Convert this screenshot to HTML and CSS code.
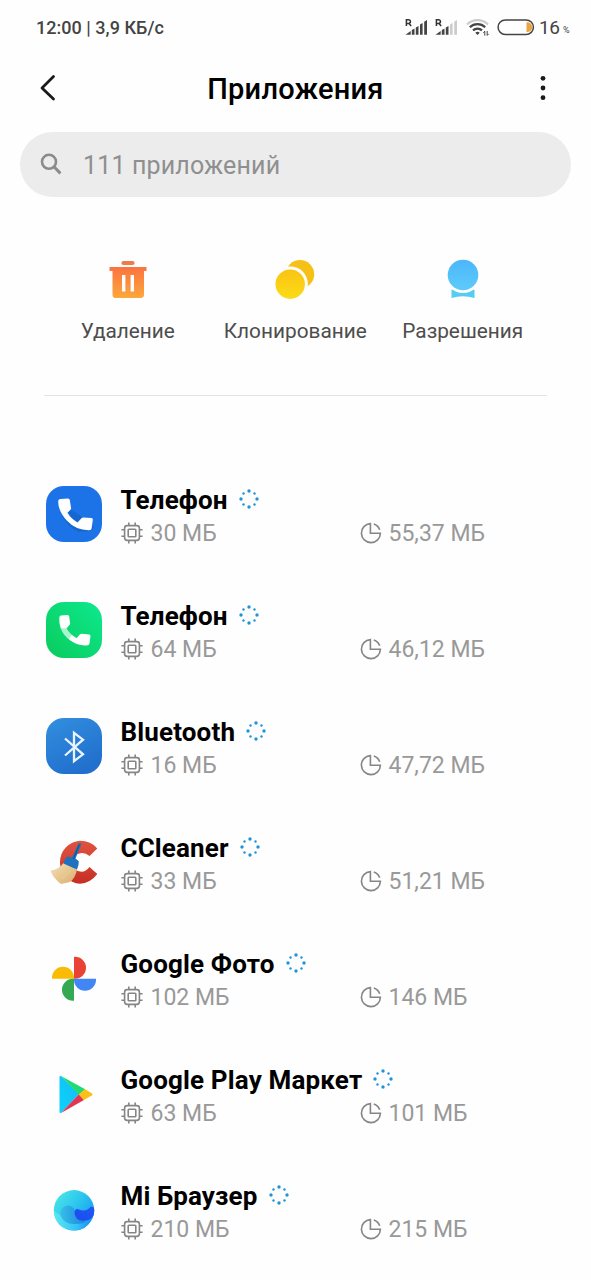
FILE: index.html
```html
<!DOCTYPE html>
<html lang="ru">
<head>
<meta charset="utf-8">
<title>Приложения</title>
<link rel="stylesheet" href="styles.css">
</head>
<body>
<svg class="defs" width="0" height="0" aria-hidden="true">
  <symbol id="spin" viewBox="0 0 20 20">
    <g fill="#1f93d8"><circle cx="10" cy="2" r="1.7"/><circle cx="18" cy="10" r="1.7"/><circle cx="10" cy="18" r="1.7"/><circle cx="2" cy="10" r="1.7"/>
    <circle cx="15.500" cy="4.500" r="1.200"/><circle cx="15.500" cy="15.500" r="1.200"/><circle cx="4.500" cy="15.500" r="1.200"/><circle cx="4.500" cy="4.500" r="1.200"/></g>
  </symbol>
  <symbol id="cpu" viewBox="0 0 22 22">
    <g fill="none" stroke="#858585" stroke-width="1.6"><rect x="3.6" y="3.6" width="14.8" height="14.8" rx="2.6"/><rect x="7.2" y="7.2" width="7.6" height="7.6" rx=".8"/>
    <path d="M7.8 3.500V.4M14.200 3.500V.4M7.800 18.500v3.100M14.200 18.500v3.100M3.500 7.800H.4M3.500 14.200H.4M18.500 7.800h3.100M18.500 14.200h3.100"/></g>
  </symbol>
  <symbol id="pie" viewBox="0 0 22 22">
    <path d="M10.400 1.600A9.500 9.500 0 1 0 20.400 11.200H10.400ZM13.800 2.100A9.500 9.500 0 0 1 19.700 7.800" fill="none" stroke="#858585" stroke-width="1.6"/>
  </symbol>
</svg>
<header class="status">
  <span class="clock">12:00 | 3,9 КБ/с</span>
  <div class="indicators">
    <svg width="23" height="18" viewBox="0 0 23 18"><path d="M1.400 8V1.700h2.200a1.800 1.800 0 0 1 0 3.700H1.400M4 5.400l2.200 2.600" fill="none" stroke="#333" stroke-width="1.500"/><path d="M.5 16.800 5.700 13v3.800ZM6.800 12l2.700-1.600v6.400H6.800ZM10.800 9.600l2.700-1.600v8.800h-2.700ZM15 6.600l2.600-1.600v11.800H15ZM19.200 3.800 22 2v14.800h-2.800Z" fill="#444"/></svg>
    <svg width="23" height="18" viewBox="0 0 23 18"><path d="M1.400 8V1.700h2.200a1.800 1.800 0 0 1 0 3.700H1.400M4 5.400l2.200 2.600" fill="none" stroke="#333" stroke-width="1.500"/><path d="M.5 16.800 5.700 13v3.800ZM6.800 12l2.700-1.600v6.400H6.800ZM10.800 9.600l2.700-1.600v8.800h-2.700Z" fill="#444"/><path d="M15 6.600l2.600-1.600v11.800H15ZM19.200 3.800 22 2v14.800h-2.800Z" fill="#ccc"/></svg>
    <svg class="wifi" width="24" height="18" viewBox="0 0 24 18"><g fill="none" stroke-width="2.2"><path d="M1 6.500a15 15 0 0 1 21 0" stroke="#ccc"/><path d="M3.800 9.300a11 11 0 0 1 15.400 0M7 12.400a6.500 6.500 0 0 1 9 0" stroke="#444"/></g><path d="M9.300 14.700a3.200 3.200 0 0 1 4.400 0l-2.200 2.400Z" fill="#444"/><path d="M18.800 17.600v-4.400l-1.500 1.600M21.200 13v4.400l1.500-1.600" fill="none" stroke="#444" stroke-width="1"/></svg>
    <svg class="battery" width="38" height="18" viewBox="0 0 38 18"><rect x="1.1" y="1.9" width="35.3" height="14.6" rx="7.3" fill="#fff" stroke="#444" stroke-width="1.5"/><path d="M29.500 4.300h.8a4.900 4.900 0 0 1 0 9.800h-.8Z" fill="#eba540"/></svg>
    <span class="level">16</span><span class="percent">%</span>
  </div>
</header>
<nav class="bar">
  <svg width="18" height="28" viewBox="0 0 18 28"><path d="M14.500 2.500 3 14l11.500 11" fill="none" stroke="#1a1a1a" stroke-width="2.800" stroke-linecap="round" stroke-linejoin="round"/></svg>
  <h1 class="title">Приложения</h1>
  <svg width="18" height="28" viewBox="0 0 18 28"><g fill="#1a1a1a"><circle cx="9" cy="4.300" r="2.400"/><circle cx="9" cy="14" r="2.400"/><circle cx="9" cy="23.700" r="2.400"/></g></svg>
</nav>
<div class="search">
  <svg width="24" height="24" viewBox="0 0 24 24"><circle cx="9" cy="9.800" r="7" fill="none" stroke="#8b8b8b" stroke-width="2.600"/><path d="m14 14.800 6.400 6.600" stroke="#8b8b8b" stroke-width="3"/></svg>
  <span class="hint">111 приложений</span>
</div>
<section class="actions">
  <div class="action">
    <svg width="42" height="42" viewBox="0 0 42 42"><defs><linearGradient id="gt" x2="0" y2="1"><stop stop-color="#fa7440"/><stop offset="1" stop-color="#fda73c"/></linearGradient></defs><rect x="14.500" y="2" width="13" height="4" rx="1.800" fill="#ee7b4b"/><path fill="url(#gt)" fill-rule="evenodd" d="M2.500 8h37v4H37v23.500q0 3.500-3.500 3.500h-25Q5.500 39 5.500 35.500V12h-3ZM15 16v16.500h3.400V16ZM23.600 16v16.500h3.400V16Z"/></svg>
    <span class="label">Удаление</span>
  </div>
  <div class="action">
    <svg width="42" height="42" viewBox="0 0 42 42"><defs><linearGradient id="gy" x2="0" y2="1"><stop stop-color="#fac313"/><stop offset="1" stop-color="#fbdc17"/></linearGradient></defs><circle cx="26" cy="15.200" r="14.200" fill="#f5c116"/><circle cx="16.200" cy="25" r="17.600" fill="#fefefe"/><circle cx="16.200" cy="25.200" r="14.700" fill="url(#gy)"/></svg>
    <span class="label">Клонирование</span>
  </div>
  <div class="action">
    <svg width="42" height="42" viewBox="0 0 42 42"><defs><linearGradient id="gb" x2="0" y2="1"><stop stop-color="#4bb6fb"/><stop offset="1" stop-color="#5ecbfa"/></linearGradient></defs><path d="M9.500 30.500H32.500v8.500q-6-1.800-11.500-1.800T9.500 39Z" fill="#55cdf2"/><circle cx="21" cy="16" r="18" fill="#fefefe"/><circle cx="21" cy="16" r="15.300" fill="url(#gb)"/></svg>
    <span class="label">Разрешения</span>
  </div>
</section>
<hr class="rule">
<main class="apps">
  <article class="app">
    <svg class="icon" viewBox="0 0 56 56"><rect width="56" height="56" rx="18" fill="#1c73e8"/><path d="M14 16Q13 24 18 33T33 46l12-1 3-4-5-5-11-8Z" fill="#1767d1"/><path d="M14.500 13 22 12.500Q23.500 12.500 23.800 14L25.200 23 21.500 26.800Q25 32.800 31.500 36.500L35.500 32.200Q36 31.500 37 31.500L45.500 32Q47 32.300 46.800 34L45.600 42.500Q45.400 44 43.500 44.200 30 44.500 21 34.800T12.200 15Q12.500 13.200 14.500 13Z" fill="#fff"/></svg>
    <div class="info"><div class="name">Телефон<svg class="spin"><use href="#spin"/></svg></div>
    <div class="meta"><span class="stat"><svg class="glyph"><use href="#cpu"/></svg>30 МБ</span><span class="stat"><svg class="glyph"><use href="#pie"/></svg>55,37 МБ</span></div></div>
  </article>
  <article class="app">
    <svg class="icon" viewBox="0 0 56 56"><defs><linearGradient id="gg" x1="1" y1="0" x2="0" y2="1"><stop stop-color="#0de98e"/><stop offset="1" stop-color="#0acb5c"/></linearGradient></defs><rect width="56" height="56" rx="18" fill="url(#gg)"/><path d="M14.800 26.200Q17 33 24 38.200L31 36.500Q24 32.500 20.500 26.200Z" fill="#a9f5cd"/><path d="M15 13.500 21.500 13Q23 13 23.200 14.500L24.200 22 20.500 26.500 14.800 26.500Q12.800 20 13.300 15.500 13.500 13.700 15 13.500ZM30.500 36.200 34 32.300Q34.700 31.600 36 31.700L43.200 32.500Q44.700 32.700 44.500 34.200L43.500 41.500Q43.200 43.200 41.700 43.300 32 44.500 23 37.500L25.500 33Z" fill="#fff"/></svg>
    <div class="info"><div class="name">Телефон<svg class="spin"><use href="#spin"/></svg></div>
    <div class="meta"><span class="stat"><svg class="glyph"><use href="#cpu"/></svg>64 МБ</span><span class="stat"><svg class="glyph"><use href="#pie"/></svg>46,12 МБ</span></div></div>
  </article>
  <article class="app">
    <svg class="icon" viewBox="0 0 56 56"><defs><linearGradient id="gl" x2=".5" y2="1"><stop stop-color="#328fdf"/><stop offset="1" stop-color="#2170cd"/></linearGradient></defs><rect width="56" height="56" rx="18" fill="url(#gl)"/><path d="M19 20.500 37 36.300 28 43.200V14.800L37 21.700 19 37.500" fill="none" stroke="#e9f4ff" stroke-width="2.300"/></svg>
    <div class="info"><div class="name">Bluetooth<svg class="spin"><use href="#spin"/></svg></div>
    <div class="meta"><span class="stat"><svg class="glyph"><use href="#cpu"/></svg>16 МБ</span><span class="stat"><svg class="glyph"><use href="#pie"/></svg>47,72 МБ</span></div></div>
  </article>
  <article class="app">
    <svg class="icon" viewBox="0 0 56 56"><defs><linearGradient id="gc" x2="0" y2="1"><stop stop-color="#e0533f"/><stop offset="1" stop-color="#c62f24"/></linearGradient><linearGradient id="gs" x2="1" y2="1"><stop stop-color="#f6e3bb"/><stop offset="1" stop-color="#d9ac68"/></linearGradient></defs><path d="M51.300 14.500 43.500 22Q40 18.800 35.500 19 26.500 20 26.500 28.500 27 37 35.500 37.800 40 37.500 43.500 33L51.300 40Q44 49.500 34 49.700A21.500 21.500 0 0 1 34 6.800Q45 6.800 51.300 14.500Z" fill="url(#gc)"/><path d="M17.500 29 31 35.500Q29.500 44 24 48L15 50Q6.500 43.500 4.500 36.500 13 35.500 17.500 29Z" fill="url(#gs)"/><path d="M10 40 19 34M16 45l8-8" stroke="#e9cd96" stroke-width="1"/><path d="M32.500 9.500Q35 8 35.200 10.500L29.500 24.500 32.800 27.200Q33 31 31 35.500L17.500 29.500Q19 24 21.500 22.500L26 23.500Z" fill="#1f72bd"/><path d="m33.300 10.500-6 14.500" stroke="#164f8a" stroke-width="1"/></svg>
    <div class="info"><div class="name">CCleaner<svg class="spin"><use href="#spin"/></svg></div>
    <div class="meta"><span class="stat"><svg class="glyph"><use href="#cpu"/></svg>33 МБ</span><span class="stat"><svg class="glyph"><use href="#pie"/></svg>51,21 МБ</span></div></div>
  </article>
  <article class="app">
    <svg class="icon" viewBox="0 0 56 56"><path d="M28 6.700h1a11 11 0 0 1 0 22h-1Z" fill="#ea4335"/><path d="M6 28.700v-1a11 11 0 0 1 22 0v1Z" fill="#fabb05"/><path d="M50 28.700v1a11 11 0 0 1-22 0v-1Z" fill="#4285f4"/><path d="M28 28.700v22h-1a11 11 0 0 1 0-22Z" fill="#34a853"/></svg>
    <div class="info"><div class="name">Google Фото<svg class="spin"><use href="#spin"/></svg></div>
    <div class="meta"><span class="stat"><svg class="glyph"><use href="#cpu"/></svg>102 МБ</span><span class="stat"><svg class="glyph"><use href="#pie"/></svg>146 МБ</span></div></div>
  </article>
  <article class="app">
    <svg class="icon" viewBox="0 0 56 56"><defs><linearGradient id="gp" x1="1" y1="0" x2="0" y2="1"><stop stop-color="#19b9f5"/><stop offset="1" stop-color="#08d5fb"/></linearGradient></defs><path d="M13.500 11Q13.500 9.500 15 10L33 28.300 15 47Q13.500 47.200 13.500 46Z" fill="url(#gp)"/><path d="M15 10 39.200 23.300 32.900 28.800Z" fill="#20da73"/><path d="M15 47 38 34 32.900 28.200Z" fill="#e33551"/><path d="M39.200 23.300 46 27.500Q47.200 28.500 46 29.300L38 34 32.900 28.500Z" fill="#fbc116"/></svg>
    <div class="info"><div class="name">Google Play Маркет<svg class="spin"><use href="#spin"/></svg></div>
    <div class="meta"><span class="stat"><svg class="glyph"><use href="#cpu"/></svg>63 МБ</span><span class="stat"><svg class="glyph"><use href="#pie"/></svg>101 МБ</span></div></div>
  </article>
  <article class="app">
    <svg class="icon" viewBox="0 0 56 56"><defs><linearGradient id="m1" x2="1" y2=".7"><stop stop-color="#4feae2"/><stop offset=".5" stop-color="#2fc9ee"/><stop offset="1" stop-color="#159bf3"/></linearGradient><linearGradient id="m2" x1="1" y1="0" x2="0" y2="1"><stop stop-color="#2058f2"/><stop offset="1" stop-color="#1c4cf0"/></linearGradient><linearGradient id="m3" x2="1"><stop stop-color="#5ae9f0"/><stop offset=".6" stop-color="#35c3f8"/><stop offset="1" stop-color="#1a8cf7"/></linearGradient><linearGradient id="m4" x2="1"><stop stop-color="#38bfe9"/><stop offset="1" stop-color="#1c84df"/></linearGradient></defs><circle cx="28" cy="28.300" r="20.200" fill="url(#m1)"/><path d="M14 33Q14.500 24 22 23.500 29 24.500 29.500 31 32 38 40 38 36 46 24 45 15 41 14 33Z" fill="url(#m4)"/><path d="M28.500 31Q29 25.500 33 27.500 40 30.500 45 24.500L48 25.500Q49.500 34 44 37.500 30 42 28.500 31Z" fill="url(#m2)"/><path d="M7.800 28.300Q10.500 32 14 32.500 17.500 42 28 42 39.500 42 45.500 37.500 40.500 48.500 28 48.500 9 47.500 7.800 28.300Z" fill="url(#m3)"/></svg>
    <div class="info"><div class="name">Mi Браузер<svg class="spin"><use href="#spin"/></svg></div>
    <div class="meta"><span class="stat"><svg class="glyph"><use href="#cpu"/></svg>210 МБ</span><span class="stat"><svg class="glyph"><use href="#pie"/></svg>215 МБ</span></div></div>
  </article>
</main>
</body>
</html>
```
FILE: styles.css
```css
* { box-sizing: border-box; }
body { margin: 0; width: 591px; height: 1280px; overflow: hidden; background: #fefefe; font-family: Roboto, "Noto Sans", sans-serif; color: #000; }
svg { display: block; flex: none; }
.defs { position: absolute; }
.status { height: 54px; padding: 0 20px 0 36px; display: flex; align-items: center; justify-content: space-between; color: #444; }
.clock { font-size: 18px; font-weight: 500; letter-spacing: .03px; }
.indicators { display: flex; align-items: center; height: 20px; }
.indicators svg + svg { margin-left: 7px; }
.indicators .wifi { margin-left: 8px; }
.indicators .battery { margin-left: 7px; }
.level { margin-left: 4px; width: 24px; font-size: 19px; letter-spacing: -.5px; }
.percent { width: 8px; font-size: 9px; padding-top: 5px; }
.bar { height: 67px; padding: 0 39px; display: flex; align-items: center; justify-content: space-between; }
.title { margin: 0; padding-top: 2px; font-size: 29px; font-weight: 500; letter-spacing: .2px; line-height: 36px; }
.search { margin: 10.5px 20px 0; height: 65px; border-radius: 33px; background: #ececec; display: flex; align-items: center; padding: 0 20px; gap: 19px; }
.hint { padding-top: 2px; font-size: 25px; letter-spacing: .15px; color: #8f8f8f; }
.actions { margin: 62.5px 44px 0; height: 136px; display: grid; grid-template-columns: repeat(3, 167.5px); }
.action { display: flex; flex-direction: column; align-items: center; }
.label { margin-top: 18px; font-size: 20.8px; line-height: 24px; color: #4d4d4d; }
.rule { margin: 0 44px; height: 1px; border: 0; background: #e3e3e3; }
.apps { margin-top: 60px; }
.app { height: 116px; padding-left: 46px; display: flex; align-items: center; gap: 18.5px; }
.icon { width: 56px; height: 56px; }
.info { padding-top: 6px; }
.name { height: 34px; display: flex; align-items: center; gap: 11px; font-size: 26px; font-weight: 700; letter-spacing: .15px; white-space: nowrap; }
.spin { width: 20px; height: 20px; margin-top: -2px; }
.meta { height: 34px; display: grid; grid-template-columns: 239px 200px; align-items: center; font-size: 23px; color: #999; }
.stat { display: flex; align-items: center; gap: 8px; line-height: 26px; }
.stat + .stat { gap: 7px; }
.glyph { width: 22px; height: 22px; margin-top: -2px; }
```
